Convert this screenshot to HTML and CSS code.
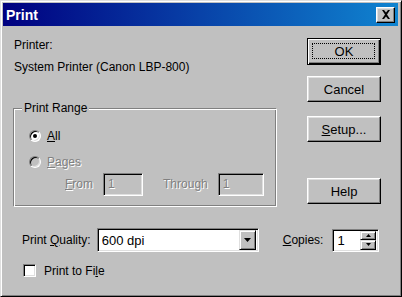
FILE: index.html
```html
<!DOCTYPE html>
<html>
<head>
<meta charset="utf-8">
<link rel="stylesheet" href="styles.css">
</head>
<body>
<div class="window">
  <div class="titlebar">
    <span class="title">Print</span>
    <span class="close"><svg width="10" height="9" viewBox="0 0 10 9"><path d="M1 0h2l2 2.5L7 0h2L6 4.5 9 9H7L5 6.5 3 9H1l3-4.5z" fill="#000"/></svg></span>
  </div>
  <div class="content">
    <div class="top">
      <div class="left">
        <div class="line first">Printer:</div>
        <div class="line">System Printer (Canon LBP-800)</div>
        <div class="group">
          <span class="legend">Print Range</span>
          <div class="opt"><span class="radio checked"></span><span><u>A</u>ll</span></div>
          <div class="opt disabled"><span class="radio"></span><span><u>P</u>ages</span></div>
          <div class="range disabled">
            <span class="lbl-from"><u>F</u>rom</span>
            <span class="field dis from">1</span>
            <span class="lbl-through">Throu<u>g</u>h</span>
            <span class="field dis through">1</span>
          </div>
        </div>
      </div>
      <div class="buttons">
        <div class="btn default ok">OK</div>
        <div class="btn cancel">Cancel</div>
        <div class="btn setup"><u>S</u>etup...</div>
        <div class="btn help">Help</div>
      </div>
    </div>
    <div class="quality-row">
      <span class="q-label">Print <u>Q</u>uality:</span>
      <div class="field select">
        <span class="value">600 dpi</span>
        <span class="dd-btn"><svg width="7" height="4" viewBox="0 0 7 4"><path d="M0 0h7L3.5 4z" fill="#000"/></svg></span>
      </div>
      <span class="c-label"><u>C</u>opies:</span>
      <div class="field spin">
        <span class="value">1</span>
        <span class="spin-btns">
          <span class="sb"><svg width="5" height="3" viewBox="0 0 5 3"><path d="M2.5 0L5 3H0z" fill="#000"/></svg></span>
          <span class="sb"><svg width="5" height="3" viewBox="0 0 5 3"><path d="M0 0h5L2.5 3z" fill="#000"/></svg></span>
        </span>
      </div>
    </div>
    <div class="check-row">
      <span class="checkbox"></span>
      <span>Print to Fi<u>l</u>e</span>
    </div>
  </div>
</div>
</body>
</html>
```
FILE: styles.css
```css
* { box-sizing: border-box; }
html, body { margin: 0; padding: 0; background: #c0c0c0; }
body {
  font-family: "Liberation Sans", Arial, sans-serif;
  font-size: 12px;
  color: #000;
}
u { text-decoration: underline; text-underline-offset: 1px; }

.window {
  width: 402px;
  height: 297px;
  background: #c0c0c0;
  border: 1px solid;
  border-color: #dfdfdf #000 #000 #dfdfdf;
  box-shadow: inset 1px 1px #fff, inset -1px -1px #808080;
  padding: 2px 3px 2px 2px;
  display: flex;
  flex-direction: column;
}

.titlebar {
  height: 23px;
  background: linear-gradient(to right, #000080, #1084d0);
  display: flex;
  align-items: center;
  justify-content: space-between;
  padding: 0 3px 0 3px;
}
.title {
  color: #fff;
  font-weight: bold;
  font-size: 14px;
}
.close {
  width: 19px;
  height: 16px;
  background: #c0c0c0;
  border: 1px solid;
  border-color: #fff #000 #000 #fff;
  box-shadow: inset -1px -1px #808080, inset 1px 1px #dfdfdf;
  display: flex;
  align-items: center;
  justify-content: center;
}

.content {
  flex: 1;
  padding-left: 10px;
}

.top { display: flex; }
.left { width: 264px; }
.line { line-height: 22px; padding-left: 1px; }
.line.first { margin-top: 8px; }

.group {
  position: relative;
  margin-top: 30px;
  height: 99px;
  border: 1px solid;
  border-color: #808080 #fff #fff #808080;
  box-shadow: inset 1px 1px #fff, inset -1px -1px #808080;
  padding: 14px 0 0 15px;
}
.legend {
  position: absolute;
  top: -8px;
  left: 8px;
  padding: 0 2px;
  background: #c0c0c0;
  line-height: 15px;
}
.opt {
  display: flex;
  align-items: center;
  gap: 6px;
  height: 26px;
}
.radio {
  width: 12px;
  height: 12px;
  border-radius: 50%;
  background: #fff;
  border: 1px solid;
  border-color: #808080 #fff #fff #808080;
  box-shadow: inset 1px 1px #000, inset -1px -1px #dfdfdf;
  position: relative;
  flex: none;
}
.radio.checked::after {
  content: "";
  position: absolute;
  left: 3px;
  top: 3px;
  width: 4px;
  height: 4px;
  border-radius: 50%;
  background: #000;
}
.disabled { color: #808080; text-shadow: 1px 1px 0 #fff; }
.disabled .radio { background: #c0c0c0; }

.range {
  display: flex;
  align-items: center;
  margin-top: -3px;
  padding-left: 36px;
  height: 24px;
}
.lbl-through { margin-left: 20px; }
.field {
  border: 1px solid;
  border-color: #808080 #fff #fff #808080;
  box-shadow: inset 1px 1px #000, inset -1px -1px #dfdfdf;
  background: #fff;
  display: flex;
  align-items: center;
  padding-left: 4px;
}
.field.dis {
  background: #c0c0c0;
  height: 23px;
}
.field.from { width: 40px; margin-left: 10px; }
.field.through { width: 46px; margin-left: 10px; }

.buttons {
  margin-left: 30px;
  width: 74px;
  display: flex;
  flex-direction: column;
}
.btn {
  position: relative;
  height: 26px;
  background: #c0c0c0;
  border: 1px solid;
  border-color: #fff #000 #000 #fff;
  box-shadow: inset -1px -1px #808080, inset 1px 1px #dfdfdf;
  display: flex;
  align-items: center;
  justify-content: center;
  font-size: 13px;
}
.btn.default {
  border-color: #000;
  box-shadow: inset 1px 1px #fff, inset -1px -1px #000, inset -2px -2px #808080;
}
.btn.default::after {
  content: "";
  position: absolute;
  left: 4px; top: 4px; right: 5px; bottom: 5px;
  border: 1px dotted #000;
}
.ok { margin-top: 12px; height: 27px; }
.cancel { margin-top: 11px; }
.setup { margin-top: 14px; }
.help { margin-top: 36px; }

.quality-row {
  display: flex;
  align-items: center;
  margin-top: 21px;
  height: 24px;
  padding-left: 9px;
}
.select {
  margin-left: 6px;
  width: 162px;
  height: 24px;
  justify-content: space-between;
  padding-right: 2px;
  font-size: 13px;
}
.dd-btn {
  width: 17px;
  height: 20px;
  background: #c0c0c0;
  border: 1px solid;
  border-color: #dfdfdf #000 #000 #dfdfdf;
  box-shadow: inset 1px 1px #fff, inset -1px -1px #808080;
  display: flex;
  align-items: center;
  justify-content: center;
}
.c-label { margin-left: 24px; }
.spin {
  margin-left: 9px;
  width: 47px;
  height: 23px;
  justify-content: space-between;
  padding-right: 2px;
  font-size: 13px;
}
.spin-btns {
  display: flex;
  flex-direction: column;
  width: 16px;
  height: 19px;
}
.sb {
  flex: 1;
  background: #c0c0c0;
  border: 1px solid;
  border-color: #dfdfdf #000 #000 #dfdfdf;
  box-shadow: inset 1px 1px #fff, inset -1px -1px #808080;
  display: flex;
  align-items: center;
  justify-content: center;
}

.check-row {
  display: flex;
  align-items: center;
  gap: 8px;
  margin-top: 11px;
  padding-left: 10px;
  height: 15px;
}
.checkbox {
  width: 13px;
  height: 13px;
  background: #fff;
  border: 1px solid;
  border-color: #808080 #fff #fff #808080;
  box-shadow: inset 1px 1px #000, inset -1px -1px #dfdfdf;
}
```
